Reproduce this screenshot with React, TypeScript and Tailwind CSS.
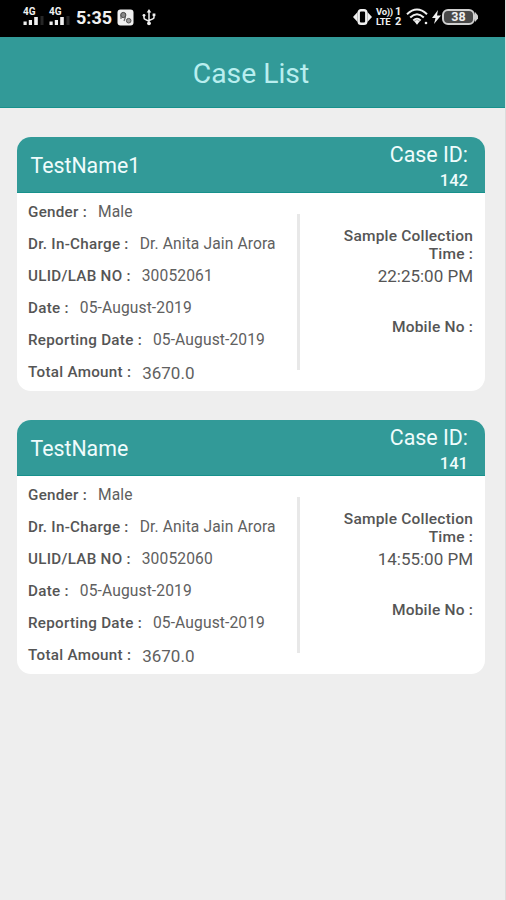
interface CaseItem {
  id: string
  name: string
  ulid: string
  time: string
}

const cases: CaseItem[] = [
  { id: '142', name: 'TestName1', ulid: '30052061', time: '22:25:00 PM' },
  { id: '141', name: 'TestName', ulid: '30052060', time: '14:55:00 PM' },
]

function Signal() {
  return (
    <div className="w-[22px] flex flex-col">
      <span className="h-[8px] text-[10px] leading-[8px] font-bold">4G</span>
      <svg width="22" height="9" viewBox="0 0 22 9" fill="currentColor">
        <rect x="0.5" y="5.5" width="3.2" height="3.5" />
        <rect x="5.8" y="4" width="3.2" height="5" />
        <rect x="11.2" y="1" width="3.6" height="8" />
        <rect x="17.5" y="0" width="3" height="9" fill="#262626" />
      </svg>
    </div>
  )
}

function StatusBar() {
  return (
    <div className="h-[37px] bg-black text-[#f0f0f0] flex items-start justify-between pl-[23px] pr-[28px]">
      <div className="flex items-start pt-[8px]">
        <Signal />
        <div className="ml-[4px]">
          <Signal />
        </div>
        <span className="ml-[5px] w-[37px] text-[18px] leading-[19px] font-bold whitespace-nowrap">5:35</span>
        <svg className="ml-[4px] mt-[1px]" width="17" height="17" viewBox="0 0 17 17">
          <rect x="0.5" y="0.5" width="16" height="16" rx="3" fill="#f0f0f0" />
          <circle cx="6.3" cy="6" r="2.6" fill="#888" stroke="#444" />
          <circle cx="11.7" cy="11.7" r="2.3" fill="#999" stroke="#555" />
          <path d="M4 6v4M8.5 8l-1.5 4" stroke="#666" strokeWidth="1.2" />
        </svg>
        <svg className="ml-[8px] mt-[1px]" width="14" height="17" viewBox="0 0 14 17" fill="none" stroke="currentColor" strokeWidth="1.5">
          <path d="M7 2.5v11M2 6.5v2.2q0 1.2 1.2 1.7L7 12.2M12 5.5v2.7q0 1.2-1.2 1.7L7 11.5" />
          <path d="M7 0 9.3 3.5H4.7z" fill="currentColor" stroke="none" />
          <circle cx="7" cy="14.3" r="1.9" fill="currentColor" stroke="none" />
          <circle cx="2" cy="6.3" r="1.4" fill="currentColor" stroke="none" />
          <path d="M10.6 4.5h2.8v2.6h-2.8z" fill="currentColor" stroke="none" />
        </svg>
      </div>
      <div className="flex items-start pt-[8px]">
        <svg className="mt-[1px]" width="19" height="16" viewBox="0 0 19 16" fill="none" stroke="currentColor">
          <rect x="5.7" y="1.2" width="7.6" height="13.6" rx="2.3" strokeWidth="2.4" />
          <path d="M4.6 3v10L0 8zM14.4 3v10L19 8z" fill="currentColor" stroke="none" />
        </svg>
        <div className="ml-[4px] mt-[-1px] w-[26px] h-[18px] flex justify-between font-bold">
          <div className="w-[18px] text-[9.5px] leading-[10px] tracking-[-0.3px]">
            <div className="h-[10px]">Vo))</div>
            <div className="h-[10px]">LTE</div>
          </div>
          <div className="w-[7px] text-[11px] leading-[10px]">
            <div className="h-[10px]">1</div>
            <div className="h-[10px]">2</div>
          </div>
        </div>
        <svg className="ml-[4px]" width="23" height="17" viewBox="0 0 23 17" fill="none" stroke="currentColor" strokeWidth="2">
          <path d="M1 6.2Q11-3.2 21 6.2M4.2 9.5Q11 3 17.8 9.5M7.3 12.5Q11 9 14.7 12.5" />
          <path d="M8 13Q11 10.8 14 13L11 16.8z" fill="currentColor" stroke="none" />
          <circle cx="20" cy="15" r="1.3" fill="currentColor" stroke="none" />
        </svg>
        <svg className="ml-[3px] mt-[2px]" width="9" height="14" viewBox="0 0 9 14" fill="currentColor">
          <path d="M6 0 0 8h3.5L2 14l7-8.5H5z" />
        </svg>
        <div className="ml-px mt-px flex items-center">
          <div className="w-[33px] h-[16px] rounded-[6px] border-2 border-[#d0d0d0] bg-[#484848] text-[12.5px] leading-[12px] font-bold text-center">
            38
          </div>
          <svg width="3" height="10" viewBox="0 0 3 10" fill="#d0d0d0">
            <path d="M0 0 3 3.5v3L0 10z" />
          </svg>
        </div>
      </div>
    </div>
  )
}

interface FieldProps {
  label: string
  value: string
  large?: boolean
}

function Field({ label, value, large }: FieldProps) {
  return (
    <div className="h-[32.15px] flex items-start gap-[11px] whitespace-nowrap leading-[20px]">
      <span className="text-[15.2px] tracking-[0.28px] font-medium text-[#555555]">{label} :</span>
      <span className={large ? 'text-[17px] pt-[1px] text-[#606060]' : 'text-[15.6px] tracking-[0.12px] text-[#606060]'}>{value}</span>
    </div>
  )
}

function CaseCard({ item }: { item: CaseItem }) {
  return (
    <div className="h-[254px] rounded-[14px] bg-white overflow-hidden">
      <div className="h-[56px] bg-[#329a98] border-b border-[#17918c] text-[#effcfc] flex justify-between pl-[14px] pr-[17px]">
        <span className="pt-[16px] text-[21.3px] leading-[26px]">{item.name}</span>
        <div className="pt-[5px] text-right">
          <div className="text-[21.4px] leading-[26px]">Case ID:</div>
          <div className="text-[16.5px] leading-[26px] font-medium">{item.id}</div>
        </div>
      </div>
      <div className="flex pl-[11.5px] pr-[12px]">
        <div className="w-[268.5px] pt-[9px]">
          <Field label="Gender" value="Male" />
          <Field label="Dr. In-Charge" value="Dr. Anita Jain Arora" />
          <Field label="ULID/LAB NO" value={item.ulid} />
          <Field label="Date" value="05-August-2019" />
          <Field label="Reporting Date" value="05-August-2019" />
          <Field label="Total Amount" value="3670.0" large />
        </div>
        <div className="mt-[21px] w-[3px] h-[156px] bg-[#e8e8e8]" />
        <div className="flex-1 pt-[34px] text-right text-[#555555]">
          <div className="ml-auto w-[140px] text-[15.5px] tracking-[0.2px] leading-[18.5px] font-medium">Sample Collection Time :</div>
          <div className="mt-[1px] text-[17px] leading-[22px]">{item.time}</div>
          <div className="mt-[30px] text-[15.5px] tracking-[0.2px] leading-[20px] font-medium">Mobile No :</div>
        </div>
      </div>
    </div>
  )
}

export default function App() {
  return (
    <div className="w-[506px] h-[900px] overflow-hidden bg-[#eeeeee] border-r border-[#dcdcdc] font-[Roboto,sans-serif]">
      <div className="w-[506px]">
        <StatusBar />
        <div className="h-[71px] bg-[#329a98] border-b border-[#17918c] text-[#b9eeef] text-center">
          <h1 className="pt-[20px] pr-[4px] text-[28.3px] leading-[34px] font-normal">Case List</h1>
        </div>
      </div>
      <div className="w-[506px] pt-[28.5px] pl-[16.5px] pr-[21px] flex flex-col gap-[29px]">
        {cases.map(item => (
          <CaseCard key={item.id} item={item} />
        ))}
      </div>
    </div>
  )
}
